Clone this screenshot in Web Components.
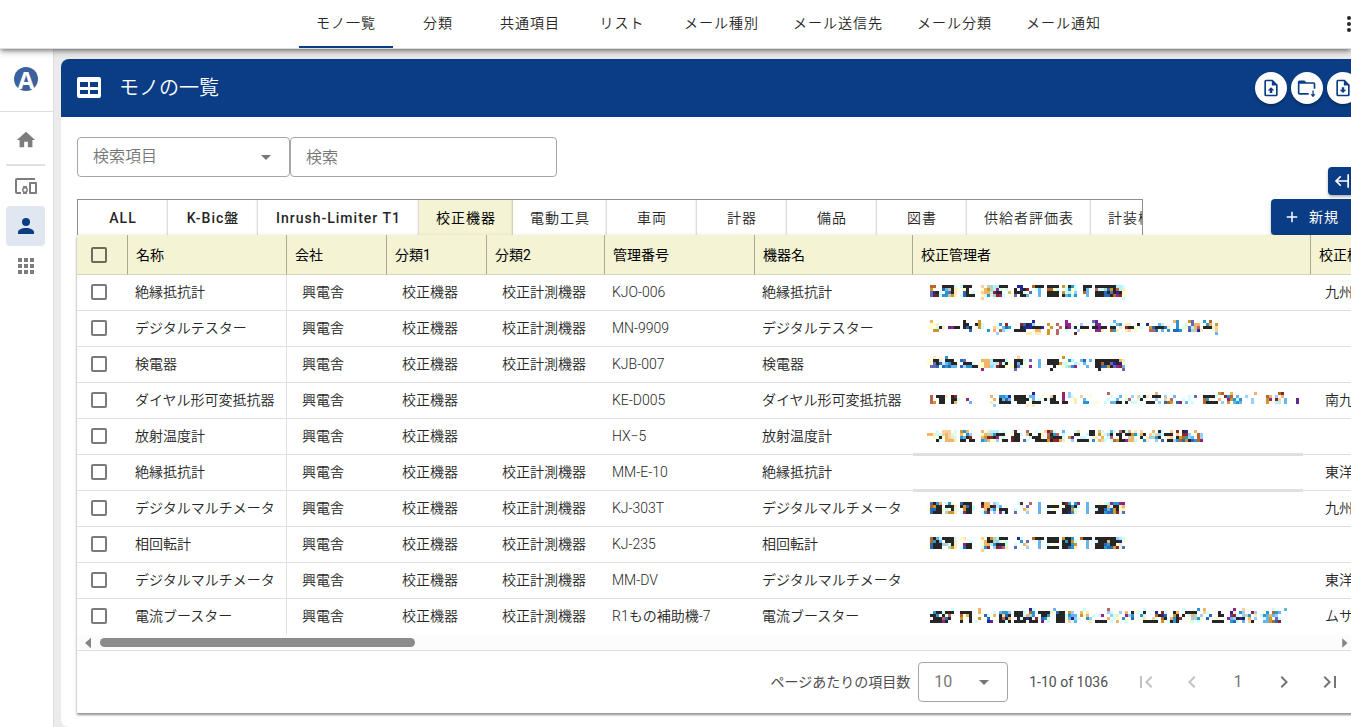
<!DOCTYPE html>
<html lang="ja">
<head>
<meta charset="utf-8">
<title>モノの一覧</title>
<style>
  html, body { margin: 0; min-height: 100vh; overflow: hidden; background: #ebebeb; }
  body { font: 350 14px/20px Roboto, "Noto Sans CJK JP", sans-serif; color: #262626; }
</style>
</head>
<body>
<asset-app></asset-app>
<script>
const NAVY = '#0a3d85';
const RESET = `
  *, *::before, *::after { box-sizing: border-box; }
  button, input, select { font: inherit; color: inherit; letter-spacing: inherit; margin: 0; }
  button { border: 0; background: none; padding: 0; cursor: pointer; }
  a { color: inherit; text-decoration: none; }
`;
class Base extends HTMLElement {
  constructor() { super(); this.attachShadow({ mode: 'open' }); }
  connectedCallback() { this.shadowRoot.innerHTML = `<style>${RESET}${this.css()}</style>${this.html()}`; }
  css() { return ''; }
  html() { return ''; }
}

const ICONS = {
  home: '<path d="M10,20V14H14V20H19V12H22L12,3L2,12H5V20H10Z"/>',
  devices: '<path d="M3 6h18V4H3c-1.1 0-2 .9-2 2v12c0 1.1.9 2 2 2h4v-2H3V6zm10 6H9v1.78c-.61.55-1 1.33-1 2.22s.39 1.67 1 2.22V20h4v-1.78c.61-.55 1-1.34 1-2.22s-.39-1.67-1-2.22V12zm-2 5.5c-.83 0-1.5-.67-1.5-1.5s.67-1.5 1.5-1.5 1.5.67 1.5 1.5-.67 1.5-1.5 1.5zM22 8h-6c-.5 0-1 .5-1 1v10c0 .5.5 1 1 1h6c.5 0 1-.5 1-1V9c0-.5-.5-1-1-1zm-1 10h-4v-8h4v8z"/>',
  account: '<path d="M12,4A4,4 0 0,1 16,8A4,4 0 0,1 12,12A4,4 0 0,1 8,8A4,4 0 0,1 12,4M12,14C16.42,14 20,15.79 20,18V20H4V18C4,15.79 7.58,14 12,14Z"/>',
  apps: '<path d="M16,20H20V16H16M16,14H20V10H16M10,8H14V4H10M16,8H20V4H16M10,14H14V10H10M4,14H8V10H4M4,20H8V16H4M10,20H14V16H10M4,8H8V4H4V8Z"/>',
  upload: '<path d="M14,2H6A2,2 0 0,0 4,4V20A2,2 0 0,0 6,22H18A2,2 0 0,0 20,20V8L14,2M18,20H6V4H13V9H18V20M12,11L16,15H13.5V18H10.5V15H8L12,11Z"/>',
  download: '<path d="M14,2H6A2,2 0 0,0 4,4V20A2,2 0 0,0 6,22H18A2,2 0 0,0 20,20V8L14,2M18,20H6V4H13V9H18V20M12,18L8,14H10.5V11H13.5V14H16L12,18Z"/>',
  folder: '<path d="M3,3H9L11,5H20A2,2 0 0,1 22,7V13H20V7H3V18H14V20H3A2,2 0 0,1 1,18V5A2,2 0 0,1 3,3M18.5,15H20V19.5H22.2L19.2,23L16.2,19.5H18.5Z"/>',
  table: '<path fill-rule="evenodd" d="M2,1H22A2,2 0 0,1 24,3V20A2,2 0 0,1 22,22H2A2,2 0 0,1 0,20V3A2,2 0 0,1 2,1M3,6V11H11V6M13,6V11H21V6M3,14V18H11V14M13,14V18H21V14"/>',
  dots: '<path d="M12,16A2,2 0 1,1 12,20A2,2 0 1,1 12,16M12,10A2,2 0 1,1 12,14A2,2 0 1,1 12,10M12,4A2,2 0 1,1 12,8A2,2 0 1,1 12,4"/>',
  plus: '<path d="M19,13H13V19H11V13H5V11H11V5H13V11H19V13Z"/>',
  collapse: '<path d="M7.4,18.4L1,12L7.4,5.6L8.8,7L4.8,11H16V4H18V20H16V13H4.8L8.8,17Z"/>',
  first: '<path d="M18.41,16.59L13.82,12L18.41,7.41L17,6L11,12L17,18L18.41,16.59M6,6H8V18H6V6Z"/>',
  prev: '<path d="M15.41,16.58L10.83,12L15.41,7.41L14,6L8,12L14,18L15.41,16.58Z"/>',
  next: '<path d="M8.59,16.58L13.17,12L8.59,7.41L10,6L16,12L10,18L8.59,16.58Z"/>',
  last: '<path d="M5.59,7.41L10.18,12L5.59,16.59L7,18L13,12L7,6L5.59,7.41M16,6H18V18H16V6Z"/>',
  caret: '<path d="M7,10L12,15L17,10H7Z"/>',
  left: '<path d="M15,4V20L6,12Z"/>',
  right: '<path d="M9,4V20L18,12Z"/>'
};
customElements.define('ui-icon', class extends Base {
  css() {
    const s = this.getAttribute('size') || 24;
    return `:host { display: block; width: ${s}px; height: ${s}px; flex: none; } svg { display: block; width: 100%; height: 100%; fill: currentColor; }`;
  }
  html() { return `<svg viewBox="0 0 24 24" aria-hidden="true">${ICONS[this.getAttribute('name')]}</svg>`; }
});

customElements.define('top-bar', class extends Base {
  css() { return `
    :host { display: flex; position: relative; z-index: 2; height: 49px; background: #fff; border-bottom: 1px solid #ddd;
      box-shadow: 0 2px 4px -1px rgba(0,0,0,.4), 0 4px 5px rgba(0,0,0,.14), 0 1px 10px rgba(0,0,0,.12); }
    nav { display: flex; flex: 1; margin-left: 299px; letter-spacing: 1px; }
    a { display: flex; align-items: center; justify-content: center; min-width: 90px; padding: 0 17px; border-bottom: 2px solid transparent; }
    a.on { border-color: ${NAVY}; }
    button { margin-right: -10px; }`; }
  html() {
    const items = ['モノ一覧', '分類', '共通項目', 'リスト', 'メール種別', 'メール送信先', 'メール分類', 'メール通知'];
    return `<nav>${items.map((t, i) => `<a href="#" class="${i ? '' : 'on'}">${t}</a>`).join('')}</nav>
      <button aria-label="メニュー"><ui-icon name="dots"></ui-icon></button>`;
  }
});

customElements.define('side-rail', class extends Base {
  css() { return `
    :host { display: block; width: 54px; flex: none; background: #fff; border-right: 1px solid #ddd; color: #7d7d7d; }
    .brand { display: flex; height: 63px; padding: 18px 0 0 14px; border-bottom: 1px solid #ddd; }
    .brand a { width: 24px; height: 24px; border-radius: 50%; background: #3b629f; color: #fff; font: bold 24px/25px "Open Sans", sans-serif; text-align: center; }
    nav { padding: 8px 8px 0 6px; }
    nav a { display: flex; height: 40px; align-items: center; justify-content: center; border-radius: 4px; }
    nav a.on { background: #e1e7f1; color: ${NAVY}; }
    hr { height: 2px; margin: 4px 0 0; border: 0; background: #e0e0e0; }`; }
  html() { return `<div class="brand"><a href="#">A</a></div>
    <nav><a href="#" aria-label="ホーム"><ui-icon name="home" size="22"></ui-icon></a><hr>
    <a href="#" aria-label="機器"><ui-icon name="devices"></ui-icon></a>
    <a href="#" class="on" aria-label="ユーザー"><ui-icon name="account"></ui-icon></a>
    <a href="#" aria-label="アプリ"><ui-icon name="apps"></ui-icon></a></nav>`; }
});

customElements.define('page-heading', class extends Base {
  css() { return `
    :host { display: flex; height: 58px; align-items: center; gap: 18px; padding: 0 16px; background: ${NAVY}; color: #fff; }
    h1 { flex: 1; margin: 0; font: 350 20px/28px Roboto, "Noto Sans CJK JP", sans-serif; }
    div { display: flex; gap: 4px; }
    button { display: flex; width: 32px; height: 32px; align-items: center; justify-content: center; border-radius: 50%; background: #fff; color: ${NAVY};
      box-shadow: 0 2px 3px rgba(0,0,0,.3); }`; }
  html() { return `<ui-icon name="table"></ui-icon><h1>モノの一覧</h1><div>
    <button aria-label="アップロード"><ui-icon name="upload" size="20"></ui-icon></button>
    <button aria-label="フォルダー"><ui-icon name="folder" size="20"></ui-icon></button>
    <button aria-label="ダウンロード"><ui-icon name="download" size="20"></ui-icon></button></div>`; }
});

customElements.define('select-box', class extends Base {
  css() { return `
    :host { display: grid; align-items: center; height: 40px; font-size: 16px; color: #777; }
    select, ui-icon { grid-area: 1 / 1; }
    select { appearance: none; width: 100%; height: 40px; padding: 0 15px; border: 1px solid #a6a6a6; border-radius: 4px; background: transparent; }
    ui-icon { justify-self: end; margin-right: 12px; pointer-events: none; }`; }
  html() { return `<select aria-label="${this.getAttribute('label')}"><option>${this.getAttribute('value')}</option></select><ui-icon name="caret"></ui-icon>`; }
});

customElements.define('search-fields', class extends Base {
  css() { return `
    :host { display: flex; }
    select-box { width: 213px; }
    input { width: 267px; height: 40px; padding: 0 15px; border: 1px solid #a6a6a6; border-radius: 4px; font-size: 16px; background: #fff; }
    input::placeholder { color: #777; opacity: 1; }`; }
  html() { return `<select-box label="検索項目" value="検索項目"></select-box><input placeholder="検索" aria-label="検索">`; }
});

customElements.define('category-tabs', class extends Base {
  css() { return `
    :host { display: flex; height: 36px; overflow: hidden; border: solid #8f8f8f; border-width: 1px 1px 0; letter-spacing: 1px; }
    button { flex: none; min-width: 90px; padding: 0 17px; background: #fff; box-shadow: inset -2px 0 2px -1px rgba(0,0,0,.18); white-space: nowrap; }
    .on { background: #f4f3d4; color: #000; font-weight: 400; }
    .latin { padding: 0 18px; font-weight: 500; }`; }
  html() {
    const items = ['ALL', 'K-Bic盤', 'Inrush-Limiter T1', '校正機器', '電動工具', '車両', '計器', '備品', '図書', '供給者評価表', '計装機器'];
    return items.map((t, i) => `<button class="${i === 3 ? 'on' : i < 3 ? 'latin' : ''}">${t}</button>`).join('');
  }
});

customElements.define('main-actions', class extends Base {
  css() { return `
    :host { display: flex; flex-direction: column; justify-content: flex-end; align-items: flex-end; gap: 4px; }
    button { display: flex; align-items: center; border-radius: 4px; background: ${NAVY}; color: #fff; box-shadow: 0 2px 3px rgba(0,0,0,.3); }
    .small { justify-content: center; width: 31px; height: 28px; }
    .new { width: 88px; height: 36px; gap: 8px; padding-left: 12px; letter-spacing: 1px; font-weight: 400; }`; }
  html() { return `<button class="small" aria-label="折りたたむ"><ui-icon name="collapse" size="20"></ui-icon></button>
    <button class="new"><ui-icon name="plus" size="18"></ui-icon>新規</button>`; }
});

/* Pixelated placeholder for hidden personal data: each letter is one 3px block of colour. */
const INK = { k: '#262626', o: '#b86528', g: '#d09728', p: '#f0b568', l: '#ffce99', y: '#ffffcc', e: '#ffebb8', c: '#b5f0ff', w: '#ccffff',
  b: '#65b5f0', B: '#2897d1', s: '#2868b8', n: '#252697', v: '#6868b8', m: '#902590', r: '#902528', R: '#b86568', t: '#b8d1b8', d: '#652528', L: '#99ceff', u: '#652690', a: '#97265f' };
const MOSAICS = {
  a: [10, [
    '.oo..kkkkw.wkkk...l.ttcckkk...nn...okkk.kkkk.gwkBw..kkk.kkkkkkkccw',
    '.gy..sbtkey.yk....ypgtcmwyw..k.nkr..wb..ooyw..wByw..kb..Rwwtsgkoce',
    '.vnkw.Bvke..sk.w..lppcrkk..p.kkkw.v..b..kkkk.gwcyL..ob..kkkskvknky',
    '.vddwBBtge.wskkk..ywBeLrmw..yv.kkb...b..kkkk.kbBwB...b..kkksskomry',
    '..................l..............................................w']],
  b: [9, [
    '.p..........k....g.................n..........m........vu.....b...................pB...gv...B.o',
    '.yye........kk..kgw.....B.r....rsknL....g..R..mm...L...wum...w.bB.ee..k..n...bc....B..w.vpp.yBp.g',
    'yy.wke.umkk.ksk..gw...lw.bsB...knnnkkkn..g..R.dmwk.kkk.kkukk.kk.e.rkk.yw..gskkkse..B.wyvcpR.kkkel',
    '..gg..........s.....B.p.oLw..kkkk..ypp..g..R..w...L.y...mme..oBe..el.y....RRs.b.B.ssB..sttne....l',
    '.......................L.........ee.ee..g..R.....d..............................................b']],
  c: [9, [
    '..e...B.......................l..............g....................',
    'yykke.kkk..sv.....pppckkkkw..kkkw.v..b..kkkk..yBc..bs.b.kkkkkkkkpe',
    'yyvkscbBkk..kkkw..yppcccrwky.kbky....b..kkkkgww..cw.b...kkokkvnkny',
    '.vvs.sBsbb.sLBBkkyyppLcrkky.ykvw..m..b....k..yctBm...b..kkssgkvmrb',
    '..................m..........v...........k...............k.......v']],
  d: [9, [
    '...................................n.........a.L............R...............p....................go..p.......p.......or....',
    '.o.kkke.kr..y........p..BBbn.kkkk.bb..y..lk..a.Lw..l..y......w..b.y.L.lwke.kkk.L..b....w.v..kkkkw..rBo.b..L......op.L.p....',
    '.R..kk..kkw..m........p.kbsb.kkkkk.b.w.kwkk..m..ye..b.......w..b..wR..wk....L..lyR...w.w....oBy..p..mgBwB...L....gm.rl.b...u',
    '.Rg.kk..kp....b......e..kkkk..kkk.ykkk...kkk.kk..e..BB..y..w.bbkk.k.ww...kkk.L.sog.sa.b.w...okkkk.L.g.bBb...L....gy.cc.b...u',
    '......................L..........e.e']],
  e: [11, [
    '...w.lll.w.gBp....p.eccc.w..wd...R..w..lrow..b...wl...kk.pw..bw.Rkwp.e.l...p.kw..l.r.kn..p..',
    'ppewwlplwy.pyBL...ypttBkkk..ykkw.pk..ke.RkBR.w...kk..wkk.gywLk.kk.kkgBwpk.lwlLwkkk.l.rrL..oL',
    '..yykyplew.Bbkr...pgrrkmyw..dkk...wkkky.odkkkw.gu..ww..ye.p.wR..k..tpy.k.eLtBk..el.kgoBLb.oL',
    '...kw.pppe.kk.kk..BbpyyL.kk.dkk.vw..kkkkgkrrpe..L.kkkk.B.plw.wogkkmppw..Be..L.s.kkLBosgksBoa']],
  f: [11, [
    '.vkBp.wBy..skkk...kpp.Lc......wd..R..b....y..krB.Bm..b...y.wcmBBmm',
    '.ogkk.kkke.kgskw..rppkdcb......w.v...b..kkkky.kkBkw..b..kkkkpwkkep',
    'ysskkyw.kw..gkkw...pkLBykkk..w..pe...b..w.y..kkkgw...b..wkksbsgkye',
    '.skkk.tgge.wmkk...wBr.L.mwk..v...L...b..kkk..kknBe...b..kkkBssgrwv']],
  g: [10, [
    '.okbwkkkkw.ye.....l.kgtckkk...nw...okkk.kkkk.gkkB..okkk.kkkkkkkLcw',
    '.oBkb.kkke..y.w...ypkktLwyw....B.v...b..kkkk.kBkgw...b..wkkkpkkkny',
    'yskkkLtwke..mkk...yppcBkkkw..w..pe...b..w.y..kkkBg...b..kkksBkkye',
    '.skkk..tge.wskk...wBr.LrmRe..v...L...b..kkkk.kksBe...b..kkkBssgrwv',
    '..................l']],
  h: [9, [
    '........w........p................nw......b.........w.......R...........w............w....B.p.........m..l.........w...b..',
    '..Bkkwkkk..kkkk..py...w.bBBL.kkkw.oB.kkkke.skk.gL..p.e......Lw..L.p.kyw.k...n.rw..kp..kkkk..lw...k...ne.BL..rL..yB.oBb..',
    '.kkB.kyR...oypk....sw.p.klsk.kkkwpLB..kkB..kkkwBbb.gyp.w.wm..Lwe..mLB..Bw...okns..gk.k.wpt.L..s..kk..mrw.LtB.e.wBbpbL..',
    '..kkkRsk...g..k..g..s...kRkp..kwknk.r.sBy..kkkybnLw..BL.....p.wy.By.s..ye..lw.ok.pBkr..yLtBy.s..y...mbLknk.p.L..wbg.vw.',
    '.kkkkmk....k..k.w...nu..kkwk.kkkk.kkk.u.w..kkk.lwb....e.kkkk.w.p..w.....kkkkk.g.wkBk...yw.w....kkkk..Bsw.b.lk...bbgosr.']]
};
customElements.define('hidden-text', class extends Base {
  css() { return `
    :host { display: block; height: 36px; margin-bottom: -1px; background: #fff; }
    svg { display: block; width: 100%; height: 36px; }`; }
  html() {
    const m = MOSAICS[this.getAttribute('pattern')];
    let out = '';
    if (m) m[1].forEach((line, y) => [...line].forEach((c, x) => {
      if (INK[c]) out += `<rect x="${14 + x * 3}" y="${m[0] + y * 3}" width="3" height="3" fill="${INK[c]}"/>`;
    }));
    if (this.hasAttribute('rule-below')) out += '<rect y="34" width="100%" height="2" fill="#e0e0e0"/>';
    if (this.hasAttribute('rule-above')) out += '<rect width="100%" height="1" fill="#e0e0e0"/>';
    return `<svg shape-rendering="crispEdges" aria-hidden="true">${out}</svg>`;
  }
});

customElements.define('asset-table', class extends Base {
  css() { return `
    :host { display: block; background: #fff; }
    .view { overflow: hidden; }
    table { width: 1700px; table-layout: fixed; border-collapse: separate; border-spacing: 0; }
    th, td { overflow: hidden; text-align: left; white-space: nowrap; }
    th { height: 40px; padding: 0 8px; border-right: 1px solid #a9a995; border-bottom: 1px solid #d6d5b8; background: #f4f3d4; color: #000; font-weight: 400; }
    td { height: 36px; padding: 0 16px 2px 15px; border-bottom: 1px solid #e0e0e0; }
    th:first-child { padding: 0 0 0 14px; }
    td:first-child { padding: 0 0 2px 14px; }
    td:nth-child(2) { padding: 0 7px 2px; border-right: 1px solid #e0e0e0; }
    td:nth-child(6), td:nth-child(7) { padding: 0 7px 2px; }
    td:nth-child(8) { padding: 0 8px 0 0; }
    td:last-child { padding-left: 14px; }
    tr:last-child td { border-bottom-color: transparent; }
    input { display: block; appearance: none; width: 16px; height: 16px; border: 2px solid #7b7b7b; border-radius: 2px; background: transparent; }
    th input { border-color: #6b6b5e; }
    .bar { display: flex; align-items: center; height: 15px; padding: 0 8px 0 4px; background: #fcfcfc; color: #858585; }
    .track { flex: 1; margin: 0 3px; }
    .thumb { width: 315px; height: 9px; border-radius: 5px; background: #8b8b8b; }`; }
  html() {
    const widths = [51, 159, 100, 100, 118, 150, 158, 398, 466];
    const heads = ['名称', '会社', '分類1', '分類2', '管理番号', '機器名', '校正管理者', '校正機関'];
    const rows = [
      ['絶縁抵抗計', 1, 'KJO-006', 'a', '九州計測器'], ['デジタルテスター', 1, 'MN-9909', 'b', ''],
      ['検電器', 1, 'KJB-007', 'c', ''], ['ダイヤル形可変抵抗器', 0, 'KE-D005', 'd', '南九州計測'],
      ['放射温度計', 0, 'HX−5', 'e', '', 'rule-below'], ['絶縁抵抗計', 1, 'MM-E-10', '', '東洋計測器', 'rule-above rule-below'],
      ['デジタルマルチメータ', 1, 'KJ-303T', 'f', '九州計測器', 'rule-above'], ['相回転計', 1, 'KJ-235', 'g', ''],
      ['デジタルマルチメータ', 1, 'MM-DV', '', '東洋計測器'], ['電流ブースター', 1, 'R1もの補助機-7', 'h', 'ムサシ']];
    return `<div class="view"><table><colgroup>${widths.map(w => `<col style="width:${w}px">`).join('')}</colgroup>
      <thead><tr><th><input type="checkbox" aria-label="すべて選択"></th>${heads.map(h => `<th>${h}</th>`).join('')}</tr></thead>
      <tbody>${rows.map(r => `<tr><td><input type="checkbox" aria-label="${r[0]}を選択"></td><td>${r[0]}</td><td>興電舎</td><td>校正機器</td>
        <td>${r[1] ? '校正計測機器' : ''}</td><td>${r[2]}</td><td>${r[0]}</td><td><hidden-text pattern="${r[3]}" ${r[5] || ''}></hidden-text></td><td>${r[4]}</td></tr>`).join('')}</tbody></table></div>
      <div class="bar"><ui-icon name="left" size="16"></ui-icon><div class="track"><div class="thumb"></div></div><ui-icon name="right" size="14"></ui-icon></div>`;
  }
});

customElements.define('page-nav', class extends Base {
  css() { return `
    :host { display: flex; height: 63px; align-items: center; justify-content: flex-end; padding-right: 6px; border-top: 1px solid #e0e0e0; background: #fff; color: #4d4d4d; font-weight: 400; }
    select-box { width: 90px; margin: 0 21px 0 8px; }
    div { display: flex; margin-left: 15px; color: #757575; }
    button { display: flex; width: 46px; height: 40px; align-items: center; justify-content: center; font-size: 16px; }
    button:disabled { color: #c2c2c2; }`; }
  html() { return `<span>ページあたりの項目数</span><select-box label="ページあたりの項目数" value="10"></select-box><span>1-10 of 1036</span>
    <div><button disabled aria-label="最初"><ui-icon name="first"></ui-icon></button><button disabled aria-label="前へ"><ui-icon name="prev"></ui-icon></button>
    <button>1</button><button aria-label="次へ"><ui-icon name="next"></ui-icon></button><button aria-label="最後"><ui-icon name="last"></ui-icon></button></div>`; }
});

customElements.define('app-panel', class extends Base {
  css() { return `
    :host { display: block; flex: 1; min-width: 0; margin: 10px -24px 0 7px; border-radius: 8px; overflow: hidden; background: #fff; }
    .body { padding: 20px 16px 14px; }
    .tools { display: flex; gap: 128px; }
    .left { display: flex; flex: 1; min-width: 0; flex-direction: column; gap: 22px; }
    main-actions { flex: none; }
    .card { position: relative; box-shadow: 0 2px 2px rgba(0,0,0,.38), 0 1px 4px rgba(0,0,0,.12); }`; }
  html() { return `<slot name="heading"></slot><div class="body"><div class="tools"><div class="left"><search-fields></search-fields><category-tabs></category-tabs></div>
    <main-actions></main-actions></div><div class="card"><slot></slot></div></div>`; }
});

customElements.define('asset-app', class extends Base {
  css() { return `
    :host { display: flex; flex-direction: column; min-height: 100vh; }
    main { display: flex; flex: 1; }`; }
  html() { return `<top-bar></top-bar><main><side-rail></side-rail><app-panel><page-heading slot="heading"></page-heading>
    <asset-table></asset-table><page-nav></page-nav></app-panel></main>`; }
});
</script>
</body>
</html>
